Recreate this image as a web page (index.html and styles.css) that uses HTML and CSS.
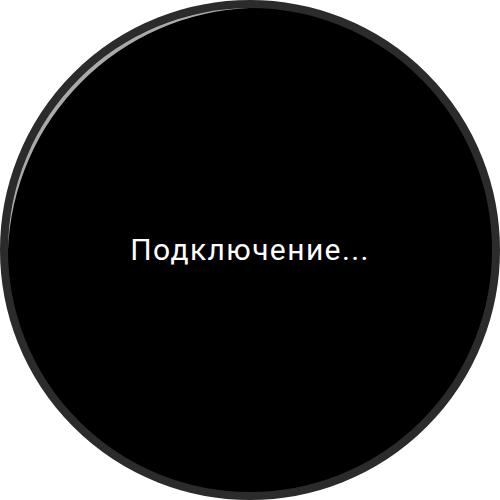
FILE: index.html
```html
<!DOCTYPE html>
<html lang="ru">
<head>
<meta charset="utf-8">
<link rel="stylesheet" href="styles.css">
</head>
<body>
<div class="watch">
  <svg class="glint" width="500" height="500" viewBox="0 0 500 500">
    <path d="M250 8 A242 242 0 0 0 8 250 A252.36 252.36 0 0 1 250 8 Z" fill="#aaaaaa"/>
  </svg>
  <div class="status">Подключение...</div>
</div>
</body>
</html>
```
FILE: styles.css
```css
html, body {
  margin: 0;
  padding: 0;
  background: #ffffff;
}
.watch {
  position: relative;
  width: 500px;
  height: 500px;
  box-sizing: border-box;
  border-radius: 50%;
  border: 8px solid #2b2b2b;
  background: #000000;
  display: flex;
  align-items: center;
  justify-content: center;
}
.glint {
  position: absolute;
  left: -8px;
  top: -8px;
}
.status {
  position: relative;
  color: #ffffff;
  font-family: Roboto, "Noto Sans", sans-serif;
  font-size: 30px;
  letter-spacing: 1.4px;
  line-height: 1;
}
```
